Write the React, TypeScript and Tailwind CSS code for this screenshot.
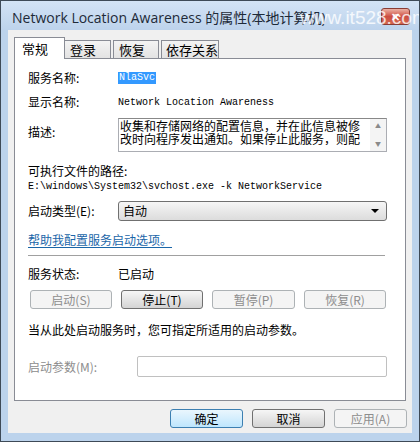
import { ReactNode } from "react";

const cjk = { fontFamily: '"Noto Sans CJK SC", "Liberation Sans", sans-serif' };
const mono = { fontFamily: '"Liberation Mono", "Noto Sans CJK SC", monospace' };

function Btn({ children, w = "w-[82px]", disabled, primary }: { children: ReactNode; w?: string; disabled?: boolean; primary?: boolean }) {
  if (disabled)
    return (
      <div className={`${w} h-[19px] flex items-center justify-center rounded-[3px] border border-[#adb2b5] bg-[#f4f4f4] text-[12px] text-[#8d8d8d]`}>
        {children}
      </div>
    );
  return (
    <div
      className={`${w} h-[19px] flex items-center justify-center rounded-[3px] border ${
        primary ? "border-[#3c7fb1] bg-gradient-to-b from-[#eaf6fd] to-[#bee6fd]" : "border-[#707070] bg-gradient-to-b from-[#f6f6f6] to-[#d4d4d4]"
      } text-[12px] text-black`}
    >
      {children}
    </div>
  );
}

export default function App() {
  return (
    <div className="relative w-[420px] h-[442px] overflow-hidden bg-[#bcd3ec] border border-[#3e4a57] select-none" style={cjk}>
      {/* title bar */}
      <div className="h-[29px] flex items-center pl-[11px] pr-[9px] bg-gradient-to-b from-[#d3e3f5] to-[#bdd3ec]">
        <span className="text-[14px] text-[#1e2a38] pt-[3px] whitespace-nowrap" style={{ fontFamily: '"Open Sans", "Noto Sans CJK SC", sans-serif' }}>
          Network Location Awareness 的属性(本地计算机)
        </span>
        <div className="ml-auto mt-[2px] w-[29px] h-[17px] rounded-[3px] border border-[#8a3c34] bg-gradient-to-b from-[#eab0a4] via-[#cc4d42] to-[#d2664f] flex items-center justify-center text-white text-[11px] font-bold">
          ✕
        </div>
      </div>
      <div className="absolute top-[3px] left-[299px] text-[19px] text-white/80 whitespace-nowrap" style={{ fontFamily: '"Liberation Sans", sans-serif' }}>
        www.it528.com
      </div>

      {/* client */}
      <div className="mx-[7px] h-[403px] bg-[#f0f0f0] px-[6px] pt-[6px]">
        {/* tabs */}
        <div className="flex items-end h-[22px] text-[13px] text-black whitespace-nowrap">
          <div className="relative z-10 w-[51px] h-[22px] -mb-px bg-white border border-b-0 border-[#898c95] pl-[7px] pt-[1px]">常规</div>
          <div className="w-[46px] h-[18px] bg-gradient-to-b from-[#f3f3f3] to-[#e3e3e3] border border-l-0 border-b-0 border-[#898c95] pl-[5px] leading-[17px]">登录</div>
          <div className="ml-[2px] w-[46px] h-[18px] bg-gradient-to-b from-[#f3f3f3] to-[#e3e3e3] border border-b-0 border-[#898c95] pl-[5px] leading-[17px]">恢复</div>
          <div className="ml-[2px] w-[58px] h-[18px] bg-gradient-to-b from-[#f3f3f3] to-[#e3e3e3] border border-b-0 border-[#898c95] pl-[4px] leading-[17px]">依存关系</div>
        </div>

        {/* panel */}
        <div className="h-[343px] bg-white border border-[#898c95] pl-[13px] pr-[18px] text-[12px] text-black flex flex-col">
          <div className="mt-[11px] h-[16px] flex items-center">
            <span className="w-[90px]">服务名称:</span>
            <span className="bg-[#3399ff] text-white px-[1px] text-[10px] leading-[12px]" style={mono}>NlaSvc</span>
          </div>
          <div className="mt-[8px] h-[16px] flex items-center">
            <span className="w-[90px]">显示名称:</span>
            <span className="text-[10px]" style={mono}>Network Location Awareness</span>
          </div>
          <div className="mt-[8px] flex">
            <span className="w-[90px] mt-[5px]">描述:</span>
            <div className="flex-1 h-[34px] border border-[#abadb3] border-t-[#888] flex">
              <div className="flex-1 h-[26px] pl-[1px] text-[12px] leading-[13px] overflow-hidden">
                收集和存储网络的配置信息，并在此信息被修改时向程序发出通知。如果停止此服务，则配置信息将不可用。
              </div>
              <div className="w-[16px] bg-[#f4f4f4] flex flex-col items-center justify-between py-[4px] text-[#8a8a8a] text-[6px] leading-[6px]">
                <span>▲</span>
                <span>▼</span>
              </div>
            </div>
          </div>
          <div className="mt-[11px] h-[16px] flex items-center">可执行文件的路径:</div>
          <div className="h-[14px] flex items-center text-[10px] whitespace-nowrap" style={mono}>
            E:\windows\System32\svchost.exe -k NetworkService
          </div>
          <div className="mt-[8px] flex items-center">
            <span className="w-[90px]">启动类型(E):</span>
            <div className="flex-1 h-[20px] rounded-[3px] border border-[#707070] bg-gradient-to-b from-[#f6f6f6] to-[#dcdcdc] flex items-center pl-[4px] pr-[7px]">
              <span>自动</span>
              <span className="ml-auto w-0 h-0 border-l-[4px] border-r-[4px] border-t-[4px] border-l-transparent border-r-transparent border-t-black" />
            </div>
          </div>
          <div className="mt-[11px] h-[16px] flex items-center">
            <span className="text-[#1a66a8] underline underline-offset-2">帮助我配置服务启动选项。</span>
          </div>
          <div className="mt-[7px] h-px bg-[#a0a0a0] mr-[2px]" />
          <div className="mt-[10px] h-[16px] flex items-center">
            <span className="w-[90px]">服务状态:</span>
            <span>已启动</span>
          </div>
          <div className="mt-[8px] flex items-center pl-[2px] gap-[9px]">
            <Btn disabled>启动(S)</Btn>
            <Btn>停止(T)</Btn>
            <Btn w="w-[83px]" disabled>暂停(P)</Btn>
            <Btn disabled>恢复(R)</Btn>
          </div>
          <div className="mt-[13px] h-[16px] flex items-center">当从此处启动服务时，您可指定所适用的启动参数。</div>
          <div className="mt-[18px] flex items-center">
            <span className="w-[109px] text-[#8d8d8d]">启动参数(M):</span>
            <div className="flex-1 h-[21px] rounded-[2px] border border-[#c0c0c0] bg-white" />
          </div>
        </div>

        {/* dialog buttons */}
        <div className="mt-[8px] flex justify-end gap-[9px] mr-[-1px]">
          <Btn w="w-[73px]" primary>确定</Btn>
          <Btn w="w-[73px]">取消</Btn>
          <Btn w="w-[73px]" disabled>应用(A)</Btn>
        </div>
      </div>
    </div>
  );
}
